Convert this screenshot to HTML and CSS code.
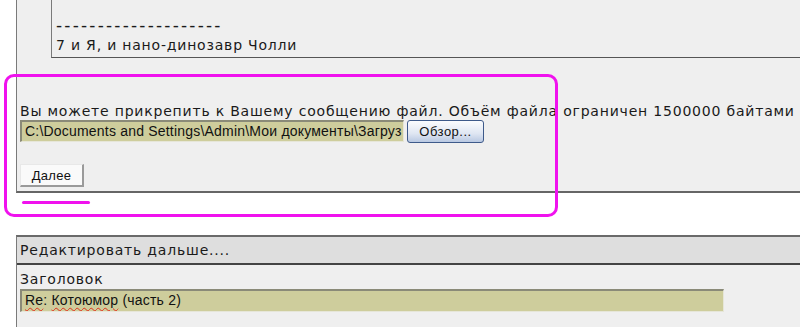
FILE: index.html
```html
<!DOCTYPE html>
<html lang="ru">
<head>
    <meta charset="UTF-8">
    <title>Ответ в теме</title>
    <link rel="stylesheet" href="styles.css">
</head>
<body>

<div class="post">
    <div class="quote">
        <div class="line dashes">--------------------</div>
        <div class="line">7 и Я, и нано-динозавр Чолли</div>
    </div>

    <div class="attach">
        <div class="note">Вы можете прикрепить к Вашему сообщению файл. Объём файла ограничен 1500000 байтами</div>
        <div class="file-row">
            <div class="field file-field">C:\Documents and Settings\Admin\Мои документы\Загруз</div>
            <button class="browse">Обзор...</button>
        </div>
        <button class="next">Далее</button>
    </div>
</div>

<div class="edit">
    <div class="edit-head">Редактировать дальше....</div>
    <div class="edit-body">
        <div class="label">Заголовок</div>
        <div class="field title-field"><span class="typo">Re</span>: <span class="typo">Котоюмор</span> (часть 2)</div>
    </div>
</div>

<div class="mark-box"></div>
<div class="mark-line"></div>

</body>
</html>
```

FILE: styles.css
```css
body {
    margin: 0;
    background: #fff;
    color: #1a1a1a;
    font-family: "DejaVu Sans", Verdana, sans-serif;
    font-size: 14px;
    letter-spacing: 0.8px;
    position: relative;
    height: 327px;
    overflow: hidden;
}
.post {
    margin-left: 16px;
    border-left: 1px solid #7a7a7a;
    border-bottom: 2px solid #666;
    background: #efefef;
}
.quote {
    margin-left: 34px;
    padding: 15px 4px 2px 4px;
    border-left: 1px solid #7a7a7a;
    border-bottom: 1px solid #555;
}
.line {
    line-height: 20px;
}
.dashes {
    font-size: 17px;
    letter-spacing: 2.2px;
}
.attach {
    padding: 44px 0 4px 3px;
}
.note {
    line-height: 18px;
    white-space: nowrap;
}
.file-row {
    display: flex;
    align-items: center;
    height: 22px;
}
.field {
    font-family: "Liberation Sans", Arial, sans-serif;
    font-size: 14px;
    letter-spacing: 0.2px;
    background: #cecd9c;
    border-top: 2px solid #8a8a78;
    border-left: 2px solid #8a8a78;
    border-right: 1px solid #e6e6d8;
    border-bottom: 1px solid #e6e6d8;
    box-sizing: border-box;
    white-space: nowrap;
    overflow: hidden;
    padding: 1px 3px;
    color: #111;
}
.file-field {
    width: 384px;
    height: 22px;
}
.browse {
    margin-left: 3px;
    width: 77px;
    height: 23px;
    font-family: "Liberation Sans", Arial, sans-serif;
    font-size: 13px;
    letter-spacing: 0.5px;
    color: #111;
    background: linear-gradient(#fbfcfe, #dfe6f2 60%, #b9c8e2);
    border: 1px solid #3e5a8a;
    border-radius: 3px;
    padding: 0;
}
.next {
    display: block;
    margin-top: 22px;
    width: 64px;
    height: 23px;
    font-family: "Liberation Sans", Arial, sans-serif;
    font-size: 13px;
    letter-spacing: 0.3px;
    color: #111;
    background: #fafafa;
    border: 1px solid #e8e8e8;
    border-right: 2px solid #9a9a9a;
    border-bottom: 2px solid #9a9a9a;
    padding: 0;
}
.edit {
    margin: 42px 0 0 16px;
    border-left: 1px solid #7a7a7a;
    border-top: 2px solid #6a6a6a;
    background: #efefef;
}
.edit-head {
    height: 26px;
    line-height: 26px;
    padding-left: 3px;
    background: #dedede;
    border-bottom: 2px solid #444;
}
.edit-body {
    padding: 5px 0 20px 3px;
}
.label {
    line-height: 18px;
}
.title-field {
    width: 704px;
    height: 23px;
    margin-top: 1px;
}
.typo {
    text-decoration: underline wavy #e0301c;
    text-decoration-thickness: 1px;
    text-underline-offset: 2px;
}
.mark-box {
    position: absolute;
    left: 4px;
    top: 74px;
    width: 548px;
    height: 137px;
    border: 3px solid #f012ee;
    border-radius: 10px;
}
.mark-line {
    position: absolute;
    left: 22px;
    top: 201px;
    width: 68px;
    height: 3px;
    border-radius: 2px;
    background: #f012ee;
}
```
